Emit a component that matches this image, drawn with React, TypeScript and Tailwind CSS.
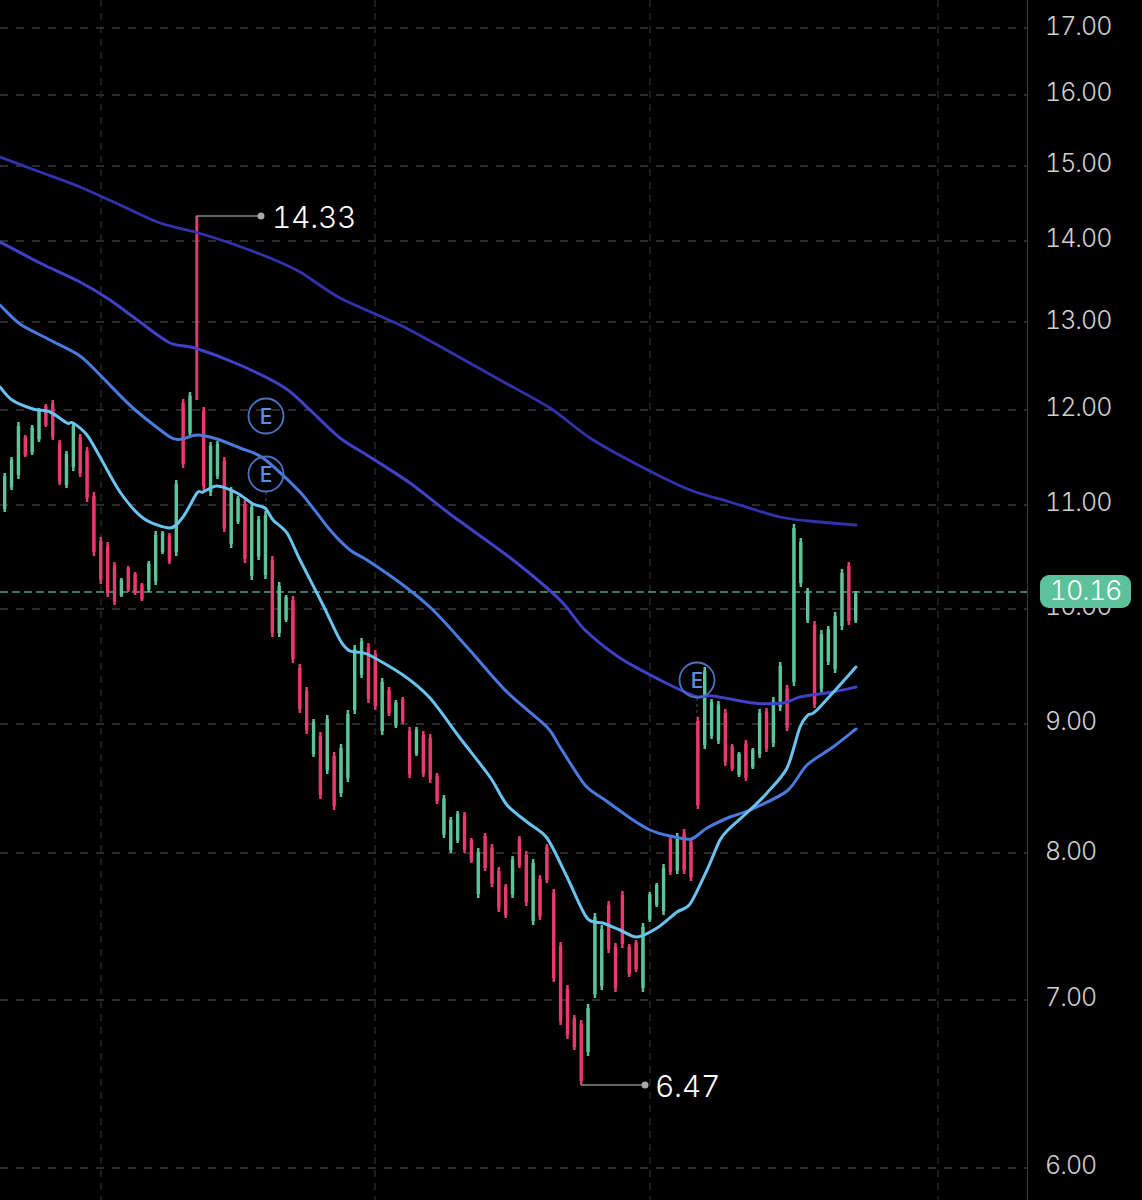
const G = "#5cc49b";
const R = "#e83a6e";

// [colour, top, bottom] per candle, evenly spaced along the time axis
const candles: [string, number, number][] = [
  ["g",473,512],["g",457,490],["g",422,479],["r",435,457],["g",425,455],["g",408,442],["r",404,427],["r",400,440],
  ["r",440,485],["g",451,488],["g",422,471],["r",434,477],["r",447,502],["r",492,556],["r",537,584],["r",542,597],
  ["r",562,605],["g",578,597],["r",566,592],["r",572,595],["r",583,601],["g",561,592],["g",531,585],["g",531,554],
  ["r",533,564],["g",480,556],["r",399,468],["g",392,437],["r",216,400],["r",407,490],["g",442,496],["g",441,479],
  ["r",457,532],["g",487,548],["g",496,524],["r",500,563],["g",503,580],["g",516,560],["g",511,579],["r",556,637],
  ["g",582,637],["g",595,622],["r",596,663],["r",664,713],["r",687,734],["g",719,757],["r",732,799],["g",715,774],
  ["r",752,810],["g",744,797],["g",710,782],["g",645,714],["g",638,678],["r",643,703],["r",650,710],["g",678,735],
  ["r",687,716],["g",700,728],["r",697,724],["r",727,778],["g",727,756],["r",731,777],["r",734,783],["r",773,804],
  ["g",795,838],["g",817,853],["g",811,843],["r",812,853],["r",838,863],["g",848,898],["r",833,871],["r",844,887],
  ["r",867,912],["r",884,918],["g",856,898],["r",836,868],["r",851,906],["g",859,925],["r",875,920],["r",844,883],
  ["r",889,982],["r",942,1025],["r",985,1039],["r",1015,1050],["r",1020,1085],["g",1004,1056],["g",913,998],["g",925,990],
  ["r",901,953],["r",943,992],["r",891,948],["r",944,977],["r",940,972],["g",923,992],["g",892,922],["g",883,907],
  ["g",864,915],["r",836,875],["g",833,874],["r",829,874],["r",838,881],["r",717,809],["g",667,749],["g",699,739],
  ["g",701,744],["r",709,766],["r",744,771],["g",752,777],["r",740,781],["g",748,769],["g",709,758],["r",708,752],
  ["g",697,747],["g",662,711],["r",685,731],["g",524,686],["g",538,587],["g",588,623],["r",621,708],["g",630,693],
  ["g",626,665],["g",612,673],["g",569,630],["r",562,625],["g",591,623],
];

const lineA = "0,157 40,172 80,187 120,205 160,223 195,232 230,243 270,258 300,272 340,298 400,325 450,352 500,380 550,408 590,438 640,466 690,490 730,502 780,517 820,522 856,525";
const lineB = "0,242 40,263 80,282 110,300 140,322 170,343 195,348 240,365 285,388 310,410 340,438 370,457 410,483 450,514 513,560 560,600 585,630 620,658 660,680 687,693 698,697 713,696 753,703 783,703 800,697 833,692 856,687";
const lineC = "0,305 20,324 50,340 80,356 103,378 133,408 170,437 182,439 197,435 217,439 240,448 263,458 300,492 330,530 350,550 367,560 403,585 433,610 467,647 507,692 547,727 560,747 585,785 605,800 630,818 650,830 670,836 691,839 707,828 730,817 750,810 787,791 807,765 833,747 856,729";
const lineD = "0,387 12,400 33,409 50,412 67,423 73,423 87,435 100,457 120,492 143,518 170,528 183,517 197,493 203,492 217,486 237,493 253,504 265,508 273,520 287,533 300,560 323,605 340,640 350,651 367,654 403,675 430,698 460,738 490,777 507,805 527,822 547,838 567,877 587,918 603,923 620,930 637,937 657,928 677,912 690,904 707,870 720,840 730,828 750,810 767,793 787,768 800,727 808,715 817,710 856,667";

// Smooth the traced points into a curve
function smooth(points: string): string {
  const p = points.split(" ").map((s) => s.split(",").map(Number));
  let d = `M${p[0][0]} ${p[0][1]}`;
  for (let i = 0; i < p.length - 1; i++) {
    const a = p[Math.max(i - 1, 0)];
    const b = p[i];
    const c = p[i + 1];
    const e = p[Math.min(i + 2, p.length - 1)];
    const t = 0.14;
    d += ` C${b[0] + (c[0] - a[0]) * t} ${b[1] + (c[1] - a[1]) * t} ${c[0] - (e[0] - b[0]) * t} ${c[1] - (e[1] - b[1]) * t} ${c[0]} ${c[1]}`;
  }
  return d;
}

const hGrid = [28, 95, 166, 241, 322, 410, 505, 609, 724, 853, 1000, 1168];
const vGrid = [101, 375, 650, 938];

const labels: [string, string][] = [
  ["17.00", "mt-[11px]"], ["16.00", "mt-[36px]"], ["15.00", "mt-[41px]"], ["14.00", "mt-[45px]"],
  ["13.00", "mt-[52px]"], ["12.00", "mt-[57px]"], ["11.00", "mt-[65px]"], ["10.00", "mt-[74px]"],
  ["9.00", "mt-[85px]"], ["8.00", "mt-[100px]"], ["7.00", "mt-[116px]"], ["6.00", "mt-[138px]"],
];

const earnings: [number, number, number, number][] = [
  [266, 416, 0, 0],
  [266, 474, 492, 505],
  [697, 680, 698, 717],
];

function Candle({ i, c, top, bottom }: { i: number; c: string; top: number; bottom: number }) {
  const x = 4.7 + 6.863 * i;
  const color = c === "g" ? G : R;
  const h = bottom - top;
  const inset = i === 28 ? 0 : Math.min(h * 0.08, 4);
  return (
    <g stroke={color}>
      <line x1={x} x2={x} y1={top} y2={bottom} strokeWidth={2.5} />
      <line x1={x} x2={x} y1={top + inset} y2={bottom - inset} strokeWidth={i === 28 ? 2.6 : 3.4} />
    </g>
  );
}

export default function App() {
  return (
    <div className="relative flex h-[1200px] w-[1142px] overflow-hidden bg-black font-['Inter',sans-serif]">
      <svg className="h-[1200px] w-[1027px] shrink-0" viewBox="0 0 1027 1200" fill="none">
        {hGrid.map((y) => (
          <line key={y} x1={0} x2={1027} y1={y} y2={y} stroke="#3a3a3a" strokeWidth={1.6} strokeDasharray="8 8" />
        ))}
        {vGrid.map((x) => (
          <line key={x} x1={x} x2={x} y1={0} y2={1200} stroke="#292929" strokeWidth={1.4} strokeDasharray="7 6" />
        ))}
        <line x1={0} x2={1027} y1={592} y2={592} stroke={G} strokeOpacity={0.85} strokeWidth={1.6} strokeDasharray="8 4" />

        {candles.map(([c, top, bottom], i) => (
          <Candle key={i} i={i} c={c} top={top} bottom={bottom} />
        ))}

        <path d={smooth(lineA)} stroke="#3232ae" strokeWidth={2.8} strokeLinecap="round" />
        <path d={smooth(lineB)} stroke="#4140c8" strokeWidth={3} strokeLinecap="round" />
        <path d={smooth(lineC)} stroke="#4a79e0" strokeWidth={3} strokeLinecap="round" />
        <path d={smooth(lineD)} stroke="#69c3ee" strokeWidth={3} strokeLinecap="round" />

        <polyline points="196,216 261,216" stroke="#86868c" strokeWidth={1.6} />
        <circle cx={261} cy={216} r={3.5} fill="#a8a8ac" />
        <text x={272} y={228} fill="#ffffff" fontSize={30} letterSpacing={-0.3} fontFamily="Inter, sans-serif" fontWeight={300} className="tabular-nums">14.33</text>

        <polyline points="581,1085 645,1085" stroke="#86868c" strokeWidth={1.6} />
        <circle cx={645} cy={1085} r={3.5} fill="#a8a8ac" />
        <text x={655} y={1097} fill="#ffffff" fontSize={30} letterSpacing={-0.3} fontFamily="Inter, sans-serif" fontWeight={300} className="tabular-nums">6.47</text>

        {earnings.map(([cx, cy, y1, y2]) => (
          <g key={cy}>
            {y2 > 0 && <line x1={cx} x2={cx} y1={y1} y2={y2} stroke="#555" strokeWidth={1} strokeDasharray="3 3" />}
            <circle cx={cx} cy={cy} r={17.5} stroke="#4a72c0" strokeWidth={1.8} />
            <text x={cx} y={cy + 7.5} textAnchor="middle" fill="#5f8fe0" fontSize={21} fontWeight={500} fontFamily="Inter, sans-serif">E</text>
          </g>
        ))}
      </svg>

      <div className="flex flex-1 flex-col border-l border-[#3a3a3a] pl-[17px]">
        {labels.map(([t, m]) => (
          <div key={t} className={`${m} h-[30px] text-[25px] font-light leading-[30px] tracking-[-1px] tabular-nums text-[#cfcfcf]`}>{t}</div>
        ))}
      </div>

      <div className="absolute left-[1040px] top-[575px] flex h-[33px] w-[91px] items-center justify-center rounded-[9px] bg-[#5bc29b] text-[27px] font-light tracking-[-1px] tabular-nums text-white">
        10.16
      </div>
    </div>
  );
}
